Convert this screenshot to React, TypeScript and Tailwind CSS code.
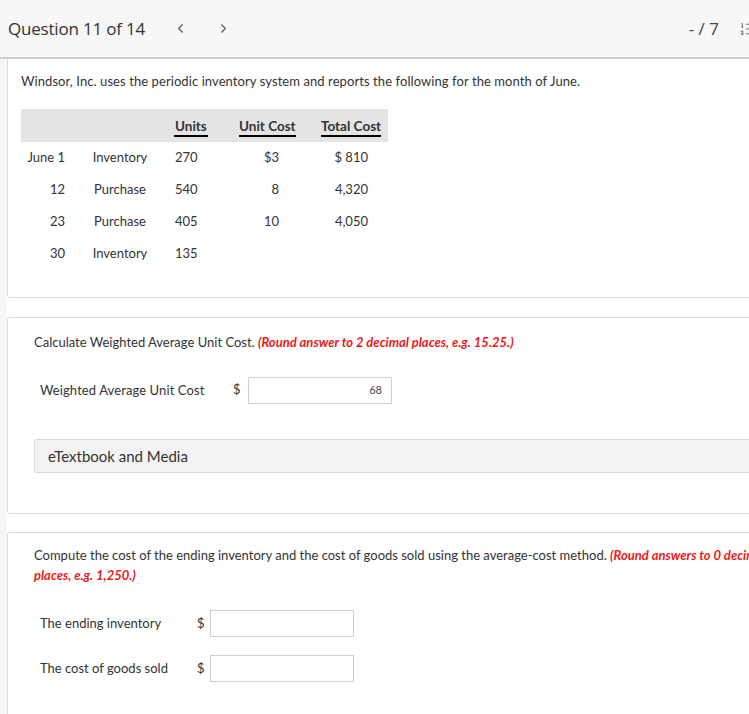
import { ChevronLeft, ChevronRight, ListOrdered } from "lucide-react";

const rows = [
  { date: "June 1", desc: "Inventory", units: "270", cost: "$3", total: "$ 810" },
  { date: "12", desc: "Purchase", units: "540", cost: "8", total: "4,320" },
  { date: "23", desc: "Purchase", units: "405", cost: "10", total: "4,050" },
  { date: "30", desc: "Inventory", units: "135", cost: "", total: "" },
];

const Field = ({ value = "", className = "" }: { value?: string; className?: string }) => (
  <div
    className={`h-[27px] w-[144px] border border-[#cfcfcf] bg-white flex items-center justify-end pr-[9px] text-[11px] text-[#444] ${className}`}
  >
    {value}
  </div>
);

export default function App() {
  return (
    <div className="w-[749px] h-[714px] overflow-hidden bg-white text-[#333] font-['Lato',sans-serif]">
      {/* top bar */}
      <div className="h-[59px] bg-[#f7f7f7] border-b-2 border-[#cdcdcd] flex items-center font-['Open_Sans',sans-serif]">
        <span className="pl-[8px] text-[17px] text-[#333] tracking-[-0.2px]">Question 11 of 14</span>
        <ChevronLeft className="ml-[28px] h-[15px] w-[15px] text-[#555]" strokeWidth={1.8} />
        <ChevronRight className="ml-[28px] h-[15px] w-[15px] text-[#555]" strokeWidth={1.8} />
        <span className="ml-auto text-[17px] text-[#444]">- / 7</span>
        <ListOrdered className="ml-[20px] mr-[-6px] h-[16px] w-[16px] text-[#777]" strokeWidth={1.6} />
      </div>

      <div className="flex">
        <div className="w-[7px] shrink-0 bg-[#f6f6f6]" />
        <div className="flex-1 min-w-0">
          {/* card 1 */}
          <div className="w-[800px] border border-t-0 border-[#dcdcdc] rounded-b-[3px] pl-[13px] pt-[14px] pb-[28px]">
            <p className="text-[13px] leading-[16px] tracking-[0.08px]">
              Windsor, Inc. uses the periodic inventory system and reports the following for the month of June.
            </p>
            <table className="mt-[20px] w-[367px] text-[13px] border-collapse table-fixed">
              <colgroup>
                <col className="w-[59px]" />
                <col className="w-[80px]" />
                <col className="w-[65px]" />
                <col className="w-[84px]" />
                <col className="w-[79px]" />
              </colgroup>
              <thead>
                <tr className="bg-[#e4e4e4] h-[33px]">
                  <th />
                  <th />
                  <th className="text-left pl-[14px] align-bottom pb-[6px]">
                    <span className="font-bold text-[13.5px] border-b-2 border-black pb-[1px] px-[1px]">Units</span>
                  </th>
                  <th className="text-left pl-[14px] align-bottom pb-[6px]">
                    <span className="font-bold text-[13.5px] border-b-2 border-black pb-[1px]">Unit Cost</span>
                  </th>
                  <th className="text-left pl-[12px] align-bottom pb-[6px]">
                    <span className="font-bold text-[13.5px] border-b-2 border-black pb-[1px]">Total Cost</span>
                  </th>
                </tr>
              </thead>
              <tbody>
                {rows.map((r, i) => (
                  <tr key={i} className={i === 3 ? "h-[31px]" : "h-[32px]"}>
                    <td className="text-right pr-[15px]">{r.date}</td>
                    <td className="text-center">{r.desc}</td>
                    <td className="pl-[15px]">{r.units}</td>
                    <td className="text-right pr-[30px]">{r.cost}</td>
                    <td className="text-right pr-[20px]">{r.total}</td>
                  </tr>
                ))}
              </tbody>
            </table>
          </div>

          {/* card 2 */}
          <div className="mt-[19px] w-[900px] border border-[#dcdcdc] rounded-[3px] pl-[26px] pt-[16px] pb-[40px]">
            <p className="text-[13px] leading-[16px]">
              Calculate Weighted Average Unit Cost.{" "}
              <span className="font-bold italic text-[#f01818]">
                (Round answer to 2 decimal places, e.g. 15.25.)
              </span>
            </p>
            <div className="mt-[27px] flex items-center pl-[6px] text-[13px]">
              <span className="w-[193px] tracking-[0.1px]">Weighted Average Unit Cost</span>
              <span className="w-[15px] self-start mt-[3px]">$</span>
              <Field value="68" />
            </div>
            <div className="mt-[35px] h-[34px] border border-[#dcdcdc] rounded-[2px] bg-[#f3f3f3] flex items-center pl-[13px] text-[15px]">
              eTextbook and Media
            </div>
          </div>

          {/* card 3 */}
          <div className="mt-[18px] w-[900px] border border-[#dcdcdc] rounded-[3px] pl-[26px] pt-[12px] pb-[40px]">
            <p className="text-[13px] leading-[20px]">
              Compute the cost of the ending inventory and the cost of goods sold using the average-cost method.{" "}
              <span className="font-bold italic text-[#f01818]">
                (Round answers to 0 decimal
                <br />
                places, e.g. 1,250.)
              </span>
            </p>
            <div className="mt-[25px] flex items-center pl-[6px] text-[13px]">
              <span className="w-[157px]">The ending inventory</span>
              <span className="w-[13px]">$</span>
              <Field />
            </div>
            <div className="mt-[18px] flex items-center pl-[6px] text-[13px]">
              <span className="w-[157px]">The cost of goods sold</span>
              <span className="w-[13px]">$</span>
              <Field />
            </div>
          </div>
        </div>
      </div>
    </div>
  );
}
